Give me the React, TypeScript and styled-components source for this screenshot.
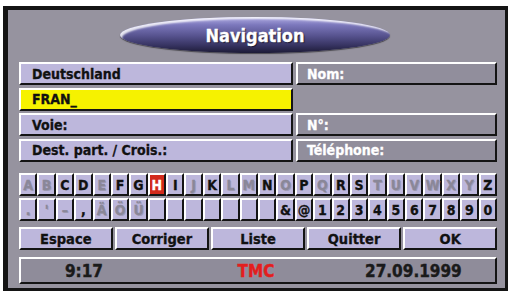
import React from "react";
import styled, { createGlobalStyle, css } from "styled-components";

const Global = createGlobalStyle`
  html, body { margin: 0; padding: 0; background: #ffffff; }
  body { font-family: "Liberation Sans Narrow", "DejaVu Sans Condensed", "Liberation Sans", sans-serif; }
`;

const FONT = `"Liberation Sans Narrow", "DejaVu Sans Condensed", "Liberation Sans", sans-serif`;

const Frame = styled.div`
  box-sizing: border-box;
  margin: 6px 0 0 3px;
  width: 505px;
  height: 285px;
  background: #96939f;
  border-style: solid;
  border-color: #141414;
  border-width: 4px 3px 3px 5px;
  padding: 7px 8px 0 11px;
  display: flex;
  flex-direction: column;
  font-family: ${FONT};
  font-weight: 700;
`;

const TitleRow = styled.div`
  display: flex;
  height: 36px;
  padding-left: 101px;
`;

const TitlePill = styled.div`
  width: 270px;
  height: 36px;
  border-radius: 50%;
  background: linear-gradient(
    to bottom,
    #aeaae2 0%,
    #7c78bc 22%,
    #57538f 52%,
    #35325f 80%,
    #1d1b36 100%
  );
  box-shadow: inset 3px 3px 2px -1px rgba(255, 255, 255, 0.85),
    0 1px 1px rgba(0, 0, 0, 0.5);
  display: flex;
  align-items: center;
  justify-content: center;
  color: #ffffff;
  font-size: 18px;
  -webkit-text-stroke: 0.3px #ffffff;
  text-shadow: 1px 1px 1px #1a1830;
`;

const Fields = styled.div`
  margin-top: 9px;
  display: grid;
  grid-template-columns: 274px 1fr;
  grid-auto-rows: 23px;
  column-gap: 3px;
  row-gap: 2.5px;
`;

const bevel = css`
  box-sizing: border-box;
  border-style: solid;
  border-width: 2px;
  border-color: #ffffff #141414 #141414 #ffffff;
`;

const Field = styled.div<{ $tone: "lav" | "yellow" | "gray" }>`
  ${bevel};
  display: flex;
  align-items: center;
  font-size: 14px;
  -webkit-text-stroke: 0.3px currentColor;
  padding-left: ${(p) => (p.$tone === "gray" ? "9px" : "11px")};
  background: ${(p) =>
    p.$tone === "yellow" ? "#f6f200" : p.$tone === "gray" ? "#918e9c" : "#bdb7dc"};
  color: ${(p) => (p.$tone === "gray" ? "#ffffff" : "#111111")};
`;

const EmptyCell = styled.div``;

const Keyboard = styled.div`
  margin-top: 11.5px;
  display: grid;
  grid-template-columns: repeat(26, 1fr);
  grid-auto-rows: 23px;
  row-gap: 2px;
`;

type KeyState = "on" | "off" | "sel";

const Key = styled.div<{ $state: KeyState }>`
  ${bevel};
  display: flex;
  align-items: center;
  justify-content: center;
  font-size: 14px;
  -webkit-text-stroke: 0.3px currentColor;
  background: ${(p) => (p.$state === "sel" ? "#d22a1c" : "#bdb7dc")};
  color: ${(p) =>
    p.$state === "sel" ? "#ffffff" : p.$state === "on" ? "#111111" : "#8a8798"};
  text-shadow: ${(p) => (p.$state === "off" ? "1px 1px 0 #a29eb8" : "none")};
`;

const Buttons = styled.div`
  margin-top: 6px;
  display: grid;
  grid-template-columns: repeat(5, 1fr);
  grid-auto-rows: 23px;
  column-gap: 2.5px;
`;

const Button = styled.div`
  ${bevel};
  background: #bdb7dc;
  color: #111111;
  display: flex;
  align-items: center;
  justify-content: center;
  font-size: 14.5px;
  -webkit-text-stroke: 0.3px #111111;
`;

const Status = styled.div`
  ${bevel};
  margin-top: 7px;
  height: 27px;
  background: #8f8c9a;
  display: grid;
  grid-template-columns: 126px 218px 1fr;
  align-items: center;
  font-size: 17px;
  color: #1a1a1a;
`;

const StatusItem = styled.div<{ $align: "center" | "left"; $red?: boolean }>`
  text-align: ${(p) => p.$align};
  color: ${(p) => (p.$red ? "#e31e1e" : "#1a1a1a")};
  -webkit-text-stroke: 0.4px currentColor;
`;

const row1 = "ABCDEFGHIJKLMNOPQRSTUVWXYZ".split("");
const row1On = new Set(["C", "D", "F", "G", "I", "K", "N", "P", "R", "S", "Z"]);

const row2: { c: string; on: boolean }[] = [
  { c: ".", on: false },
  { c: "'", on: false },
  { c: "–", on: false },
  { c: ",", on: true },
  { c: "Ä", on: false },
  { c: "Ö", on: false },
  { c: "Ü", on: false },
  ...Array.from({ length: 7 }, () => ({ c: "", on: false })),
  { c: "&", on: true },
  { c: "@", on: true },
  ..."1234567890".split("").map((c) => ({ c, on: true })),
];

export default function App() {
  return (
    <>
      <Global />
      <Frame>
        <TitleRow>
          <TitlePill>Navigation</TitlePill>
        </TitleRow>
        <Fields>
          <Field $tone="lav">Deutschland</Field>
          <Field $tone="gray">Nom:</Field>
          <Field $tone="yellow">FRAN_</Field>
          <EmptyCell />
          <Field $tone="lav">Voie:</Field>
          <Field $tone="gray">N°:</Field>
          <Field $tone="lav">Dest. part. / Crois.:</Field>
          <Field $tone="gray">Téléphone:</Field>
        </Fields>
        <Keyboard>
          {row1.map((c) => (
            <Key key={c} $state={c === "H" ? "sel" : row1On.has(c) ? "on" : "off"}>
              {c}
            </Key>
          ))}
          {row2.map((k, i) => (
            <Key key={"r2" + i} $state={k.on ? "on" : "off"}>
              {k.c}
            </Key>
          ))}
        </Keyboard>
        <Buttons>
          <Button>Espace</Button>
          <Button>Corriger</Button>
          <Button>Liste</Button>
          <Button>Quitter</Button>
          <Button>OK</Button>
        </Buttons>
        <Status>
          <StatusItem $align="center">9:17</StatusItem>
          <StatusItem $align="center" $red>
            TMC
          </StatusItem>
          <StatusItem $align="left">27.09.1999</StatusItem>
        </Status>
      </Frame>
    </>
  );
}
